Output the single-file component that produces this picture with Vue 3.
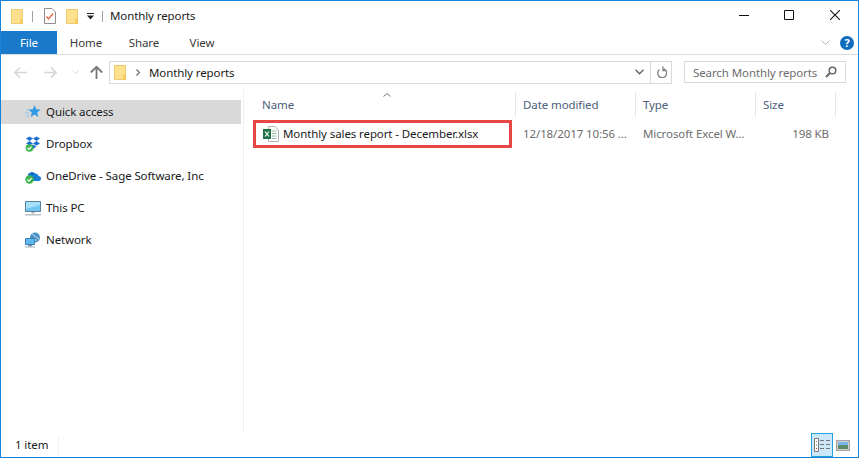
<script setup>
const places = [
  { name: 'Quick access', icon: 'star', active: true },
  { name: 'Dropbox', icon: 'dropbox' },
  { name: 'OneDrive - Sage Software, Inc', icon: 'onedrive' },
  { name: 'This PC', icon: 'pc' },
  { name: 'Network', icon: 'network' },
]
const tabs = ['Home', 'Share', 'View']
</script>

<template>
  <div class="window">
    <div class="titlebar">
      <svg class="ic folder" width="12" height="15" viewBox="0 0 12 15"><path d="M.5.5h11v14H.5z" fill="#fce08e" stroke="#ebcc6e"/><path d="M9 10h3v5H9z" fill="#f5cd5f"/></svg>
      <span class="qsep"></span>
      <svg class="ic check" width="12" height="16" viewBox="0 0 12 16"><path d="M.5.5H8L11.500 4v11.500H.5z" fill="#fff" stroke="#8f8f8f"/><path d="M2.500 8.500l2 2.500 4.500-5.500" fill="none" stroke="#e8643a" stroke-width="1.300"/></svg>
      <svg class="ic folder2" width="12" height="15" viewBox="0 0 12 15"><path d="M.5.5h11v14H.5z" fill="#fce08e" stroke="#ebcc6e"/><path d="M9 10h3v5H9z" fill="#f5cd5f"/></svg>
      <svg class="ic drop" width="7" height="7" viewBox="0 0 7 7"><path d="M0 0h7v1H0zM0 2.500h7L3.500 6.500z" fill="#222"/></svg>
      <span class="qsep last"></span>
      <span class="title">Monthly reports</span>
      <div class="winbtns">
        <svg class="min" width="10" height="10" viewBox="0 0 10 10"><path d="M0 5.500h10" stroke="#111"/></svg>
        <svg width="10" height="10" viewBox="0 0 10 10"><path d="M.5.500h9v9h-9z" fill="none" stroke="#111"/></svg>
        <svg width="10" height="10" viewBox="0 0 10 10"><path d="M0 0l10 10M10 0L0 10" stroke="#111" stroke-width="1.050"/></svg>
      </div>
    </div>

    <div class="ribbon">
      <div class="file">File</div>
      <div v-for="t in tabs" :key="t" class="tab">{{ t }}</div>
      <svg class="ribbon-chev" width="9" height="6" viewBox="0 0 9 6"><path d="M.5.500l4 4 4-4" fill="none" stroke="#b4b4b4"/></svg>
      <div class="help">?</div>
    </div>

    <div class="nav">
      <svg class="arrow" width="13" height="11" viewBox="0 0 13 11"><path d="M6 .5L1 5.500l5 5M1 5.500h12" fill="none" stroke="#d6d6d6" stroke-width="1.600"/></svg>
      <svg class="arrow fwd" width="13" height="11" viewBox="0 0 13 11"><path d="M7 .5l5 5-5 5M12 5.500H0" fill="none" stroke="#d6d6d6" stroke-width="1.600"/></svg>
      <svg class="navchev" width="7" height="4" viewBox="0 0 7 4"><path d="M.5.500l3 3 3-3" fill="none" stroke="#d6d6d6"/></svg>
      <svg class="arrow up" width="13" height="13" viewBox="0 0 13 13"><path d="M.8 6.500l5.700-5.700 5.700 5.700M6.500 1v12" fill="none" stroke="#777" stroke-width="1.800"/></svg>
      <div class="address">
        <svg width="12" height="15" viewBox="0 0 12 15"><path d="M.5.5h11v14H.5z" fill="#fce08e" stroke="#ebcc6e"/><path d="M9 10h3v5H9z" fill="#f5cd5f"/></svg>
        <svg class="crumb" width="4" height="7" viewBox="0 0 4 7"><path d="M.5.500l3 3-3 3" fill="none" stroke="#666" stroke-width="1.200"/></svg>
        <span class="path">Monthly reports</span>
        <svg class="addr-chev" width="9" height="6" viewBox="0 0 9 6"><path d="M.5.800l4 4 4-4" fill="none" stroke="#666" stroke-width="1.400"/></svg>
        <div class="refresh">
          <svg width="11" height="12" viewBox="0 0 11 12"><path d="M3.500 2.500A4.500 4.500 0 1 0 8 3M4.500 0v4H1" fill="none" stroke="#858585" stroke-width="1.400" transform="matrix(-1 0 0 1 11.500 .5)"/></svg>
        </div>
      </div>
      <div class="search">
        <span>Search Monthly reports</span>
        <svg width="12" height="12" viewBox="0 0 12 12"><circle cx="7.500" cy="4.500" r="3.300" fill="none" stroke="#666" stroke-width="1.500"/><path d="M5 7l-4 4" stroke="#666" stroke-width="2"/></svg>
      </div>
    </div>

    <div class="body">
      <aside class="sidebar">
        <div v-for="p in places" :key="p.name" class="place" :class="{ active: p.active }">
          <svg width="16" height="16" viewBox="0 0 16 16">
            <template v-if="p.icon === 'star'">
              <path d="M9.500 1l1.700 4.300 4.500.3-3.500 2.900 1.200 4.500-3.900-2.500-3.900 2.500 1.200-4.500L3.500 5.600l4.300-.3z" fill="#2f9be6"/>
              <path d="M1 6h4M0 9h4M1 12h3" stroke="#8cc6ee"/>
            </template>
            <template v-else-if="p.icon === 'dropbox'">
              <path d="M1 2.500L4.500.5 8 2.500 4.500 5zM8 2.500l3.500-2 3.500 2L11.500 5zM1 7.500L4.500 5 8 7.500l-3.500 2zM8 7.500L11.500 5 15 7.500l-3.500 2zM4.500 10.500L8 8.500l3.500 2L8 13z" fill="#1c6fd0"/>
              <circle cx="4.500" cy="12" r="3.800" fill="#3eb54a"/>
              <path d="M2.500 12l1.500 1.500 2.500-2.800" fill="none" stroke="#fff" stroke-width="1.200"/>
            </template>
            <template v-else-if="p.icon === 'onedrive'">
              <path d="M3 9a4 4 0 0 1 7-3.500 3 3 0 0 1 3.500 2.500A2.500 2.500 0 0 1 13.500 13H4z" fill="#1c7fd6"/>
              <path d="M5 6a4 4 0 0 1 5-.5L7 7z" fill="#0b5fb0"/>
              <circle cx="4.500" cy="11.500" r="4.200" fill="#3eb54a"/>
              <path d="M2.300 11.500l1.700 1.700 2.700-3" fill="none" stroke="#fff" stroke-width="1.200"/>
            </template>
            <template v-else-if="p.icon === 'pc'">
              <path d="M.5 1.500h15v10H.5z" fill="#6fc6f2" stroke="#5b7f99"/>
              <path d="M1 2h14v3L1 9z" fill="#a5defa"/>
              <path d="M6.500 12h3v1.500h-3z" fill="#a9b4bd"/>
              <path d="M0 14h16v1.500H0z" fill="#b9c2c9"/>
            </template>
            <template v-else>
              <circle cx="10" cy="5.500" r="5" fill="#4a8fc4"/>
              <path d="M7 2c2 0 2 3 4 3s2 2 3 2M8 8c1-1 3-1 3 1" fill="none" stroke="#b7d8ec" stroke-width="1.200"/>
              <path d="M.5 6.500h9v6h-9z" fill="#5db9ee" stroke="#3d7fb0"/>
              <path d="M3 13h4v1.500H3z" fill="#7d93a3"/>
              <path d="M0 14.500h10v1H0z" fill="#9fb0bc"/>
            </template>
          </svg>
          <span>{{ p.name }}</span>
        </div>
      </aside>

      <main class="list">
        <div class="sort">
          <svg width="8" height="4" viewBox="0 0 8 4"><path d="M.5 3.500L4 .5l3.500 3" fill="none" stroke="#777"/></svg>
        </div>
        <div class="cols head">
          <div>Name</div>
          <div>Date modified</div>
          <div>Type</div>
          <div>Size</div>
          <div></div>
        </div>
        <div class="row">
          <div class="filename">
            <svg width="16" height="16" viewBox="0 0 16 16">
              <path d="M5.500.5H12L15.500 4v11.500h-10z" fill="#fff" stroke="#b4b4b4"/>
              <path d="M9 5h4.500M9 7.500h4.500M9 10h4.500M9 12.500h4.500" stroke="#8dbb9c"/>
              <path d="M0 3h8v10H0z" fill="#1e7145"/>
              <path d="M2 5.500l4 5M6 5.500l-4 5" stroke="#fff" stroke-width="1.200"/>
            </svg>
            <span>Monthly sales report - December.xlsx</span>
          </div>
          <div class="cell date">12/18/2017 10:56 ...</div>
          <div class="cell type">Microsoft Excel W...</div>
          <div class="cell size">198 KB</div>
        </div>
      </main>
    </div>

    <div class="status">
      <span class="count">1 item</span>
      <div class="views">
        <div class="view on">
          <svg width="16" height="14" viewBox="0 0 16 14"><path d="M.5.500h4v13h-4z" fill="#fff" stroke="#777"/><path d="M2 3h1v1H2zM2 6.500h1v1H2z" fill="#777"/><path d="M2 10h1v1H2z" fill="#c0392b"/><path d="M6 2.500h4M12 2.500h4M6 6.500h4M12 6.500h4M6 10.500h4M12 10.500h4" stroke="#777"/></svg>
        </div>
        <svg class="thumb" width="14" height="11" viewBox="0 0 14 11"><path d="M.75.750h12.500v9.500H.75z" fill="#fff" stroke="#a5a5a5" stroke-width="1.500"/><path d="M2 2h10v3H2z" fill="#79b7ea"/><path d="M2 5h10v4H2z" fill="#5d8a6b"/></svg>
      </div>
    </div>
  </div>
</template>

<style>
html, body { margin: 0; background: #fff; }
</style>

<style scoped>
.window {
  width: 859px;
  height: 458px;
  box-sizing: border-box;
  border: 1px solid #1883d7;
  display: flex;
  flex-direction: column;
  background: #fff;
  font-family: "Noto Sans", "Open Sans", sans-serif;
  font-size: 11.5px;
  letter-spacing: -0.1px;
  color: #1a1a1a;
  overflow: hidden;
}
svg { display: block; flex: none; }

.titlebar {
  height: 30px;
  flex: none;
  display: flex;
  align-items: center;
}
.ic.folder { margin-left: 10px; }
.qsep { width: 1px; height: 11px; background: #a0a0a0; margin-left: 9px; }
.ic.check { margin-left: 11px; }
.ic.folder2 { margin-left: 10px; }
.ic.drop { margin-left: 9px; }
.qsep.last { margin-left: 8px; }
.title { margin-left: 7px; padding-bottom: 2px; }
.winbtns {
  margin-left: auto;
  display: flex;
  gap: 36px;
  align-items: center;
  padding-right: 18px;
  margin-top: -2px;
}
.winbtns .min { margin-right: -1px; }

.ribbon {
  height: 24px;
  flex: none;
  display: flex;
  align-items: center;
  border-bottom: 1px solid #dadbdc;
  box-sizing: border-box;
}
.file {
  width: 56px;
  height: 23px;
  background: #1979ca;
  color: #fff;
  display: flex;
  align-items: center;
  justify-content: center;
}
.tab { width: 58px; text-align: center; color: #3b3b3b; }
.ribbon-chev { margin-left: auto; }
.help {
  width: 14px;
  height: 14px;
  margin: 0 4px 0 10px;
  border-radius: 50%;
  background: #0f6cbd;
  color: #fff;
  font-size: 11px;
  font-weight: 700;
  line-height: 14px;
  text-align: center;
}

.nav {
  height: 34px;
  flex: none;
  display: flex;
  align-items: center;
  padding-left: 13px;
}
.arrow.fwd { margin-left: 17px; }
.navchev { margin-left: 15px; }
.arrow.up { margin-left: 11px; }
.address {
  width: 563px;
  height: 23px;
  box-sizing: border-box;
  margin-left: 6px;
  border: 1px solid #d9d9d9;
  display: flex;
  align-items: center;
  padding-left: 4px;
}
.crumb { margin-left: 10px; }
.path { margin-left: 9px; }
.addr-chev { margin-left: auto; margin-right: 6px; }
.refresh {
  width: 20px;
  height: 100%;
  border-left: 1px solid #d9d9d9;
  display: flex;
  align-items: center;
  justify-content: center;
}
.search {
  width: 162px;
  height: 22px;
  box-sizing: border-box;
  margin-left: 12px;
  border: 1px solid #d9d9d9;
  display: flex;
  align-items: center;
  justify-content: space-between;
  padding: 0 8px;
  color: #6d6d6d;
}

.body { flex: 1; display: flex; min-height: 0; }
.sidebar {
  width: 243px;
  box-sizing: border-box;
  border-right: 1px solid #f0f0f0;
  padding-top: 11px;
  display: flex;
  flex-direction: column;
  gap: 8px;
}
.place {
  width: 240px;
  height: 24px;
  display: flex;
  align-items: center;
  gap: 5px;
  padding-left: 24px;
  box-sizing: border-box;
}
.place span { padding-bottom: 2px; }
.place.active { background: #d9d9d9; }

.list { flex: 1; position: relative; padding-top: 3px; }
.sort { position: absolute; left: 139px; top: 4px; }
.cols, .row {
  display: grid;
  grid-template-columns: 272px 120px 120px 80px 1fr;
}
.head { height: 25px; color: #4c607a; }
.head > div {
  display: flex;
  align-items: center;
  padding-left: 7px;
  border-right: 1px solid #e5e5e5;
  box-sizing: border-box;
}
.head > div:first-child { padding-left: 18px; }
.head > div:last-child { border: 0; }
.row { margin-top: 3px; height: 28px; align-items: center; }
.filename {
  width: 259px;
  height: 28px;
  margin-left: 9px;
  box-sizing: border-box;
  border: 3px solid #e54845;
  display: flex;
  align-items: center;
  gap: 4px;
  padding-left: 7px;
  white-space: nowrap;
}
.filename span { padding-bottom: 2px; }
.cell { color: #6d6d6d; padding: 0 0 2px 7px; white-space: nowrap; }
.cell.size { text-align: right; padding-right: 7px; }

.status {
  height: 24px;
  flex: none;
  display: flex;
  align-items: center;
  justify-content: space-between;
}
.count {
  width: 43px;
  padding: 0 0 2px 14px;
  border-right: 1px solid #f0f0f0;
}
.views { display: flex; align-items: center; height: 100%; padding-right: 8px; }
.view {
  width: 22px;
  height: 100%;
  box-sizing: border-box;
  background: #cce8f8;
  border: 1px solid #26a0da;
  display: flex;
  align-items: center;
  justify-content: center;
}
.thumb { margin-left: 3px; }
</style>
